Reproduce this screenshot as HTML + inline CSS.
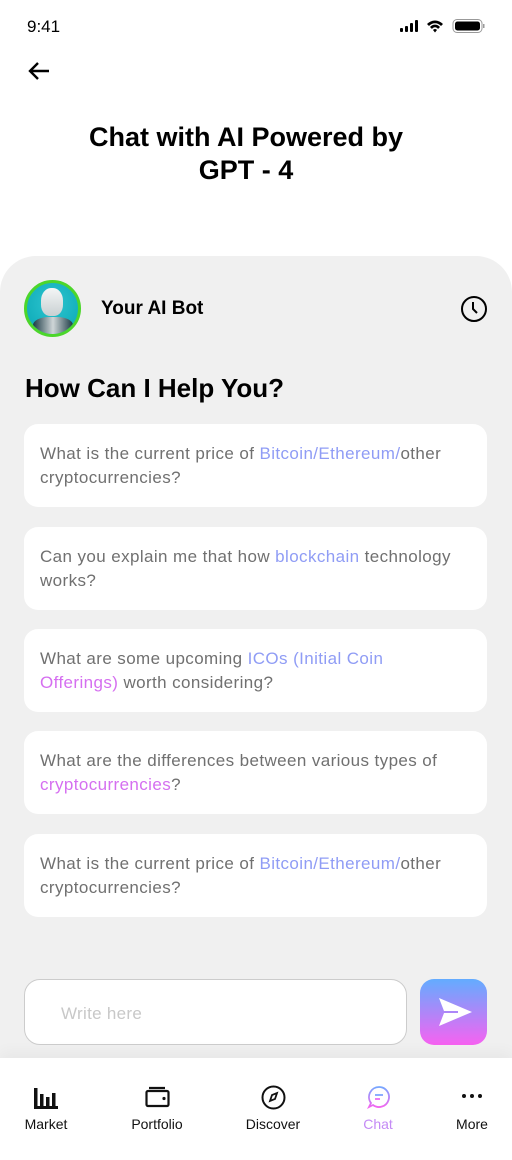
<!DOCTYPE html>
<html><head><meta charset="utf-8"><style>
*{margin:0;padding:0;box-sizing:border-box}
body{width:512px;height:1160px;background:#fff;font-family:"Liberation Sans",sans-serif;position:relative;overflow:hidden;color:#000}
.abs{position:absolute}
.panel{left:0;top:256px;width:512px;height:830px;background:#f0f0f0;border-radius:36px 36px 0 0}
.card{position:absolute;left:24px;width:463px;height:83px;background:#fff;border-radius:14px;padding:18px 16px;font-size:17px;letter-spacing:0.4px;line-height:24px;color:#707070;white-space:nowrap}
.b{color:#8f9cf5}.p{color:#d56ff0}
.nav{left:0;top:1058px;width:512px;height:102px;background:#fff;box-shadow:0 -6px 14px rgba(0,0,0,0.04)}
.ni{position:absolute;top:1116px;font-size:14px;width:80px;text-align:center;color:#111}
</style></head><body>
<div class="abs" style="left:27px;top:17px;font-size:17px;font-weight:500">9:41</div>
<svg class="abs" style="left:399px;top:18px" width="86" height="16" viewBox="0 0 86 16">
<rect x="1" y="10" width="3" height="4" rx="1"/><rect x="6" y="8" width="3" height="6" rx="1"/><rect x="11" y="5" width="3" height="9" rx="1"/><rect x="16" y="2" width="3" height="12" rx="1"/>
<path d="M28 6a11 11 0 0 1 16 0l-2 2a8 8 0 0 0-12 0zM31 9a6.5 6.5 0 0 1 10 0l-2 2a3.5 3.5 0 0 0-6 0zM34 12l2 2.5 2-2.5a2.5 2.5 0 0 0-4 0z"/>
<rect x="54" y="1.5" width="29" height="13" rx="4" fill="none" stroke="#999" stroke-width="1"/><rect x="56" y="3.5" width="25" height="9" rx="2.5"/><rect x="84" y="6" width="1.5" height="4" fill="#999"/>
</svg>
<svg class="abs" style="left:27px;top:60px" width="24" height="22" viewBox="0 0 24 22"><path d="M22 11H3M11 3L3 11l8 8" fill="none" stroke="#000" stroke-width="2.4"/></svg>
<div class="abs" style="left:0;top:121px;width:492px;text-align:center;font-size:27px;font-weight:bold;line-height:33px">Chat with AI Powered by<br>GPT - 4</div>
<div class="abs panel"></div>
<div class="abs" style="left:24px;top:280px;width:57px;height:57px;border-radius:50%;border:3px solid #4cd62b;background:radial-gradient(circle at 50% 40%,#2ec5d0,#08a6b3);overflow:hidden">
<div style="position:absolute;left:14px;top:5px;width:22px;height:28px;border-radius:45% 45% 40% 40%;background:linear-gradient(#f4f6f6,#c9d0d2)"></div>
<div style="position:absolute;left:6px;top:34px;width:40px;height:20px;border-radius:40% 40% 0 0;background:linear-gradient(90deg,#1b3a44,#cfd6d8,#1b3a44)"></div></div>
<div class="abs" style="left:101px;top:298px;font-size:19px;font-weight:bold">Your AI Bot</div>
<svg class="abs" style="left:460px;top:295px" width="28" height="28" viewBox="0 0 28 28"><circle cx="14" cy="14" r="12" fill="none" stroke="#000" stroke-width="2"/><path d="M13 7v7l4 4" fill="none" stroke="#000" stroke-width="2"/></svg>
<div class="abs" style="left:25px;top:373px;font-size:26px;font-weight:bold">How Can I Help You?</div>
<div class="card" style="top:424px">What is the current price of <span class="b">Bitcoin/Ethereum/</span>other<br>cryptocurrencies?</div>
<div class="card" style="top:527px">Can you explain me that how <span class="b">blockchain</span> technology<br>works?</div>
<div class="card" style="top:629px">What are some upcoming <span class="b">ICOs (Initial Coin</span><br><span class="p">Offerings)</span> worth considering?</div>
<div class="card" style="top:731px">What are the differences between various types of<br><span class="p">cryptocurrencies</span>?</div>
<div class="card" style="top:834px">What is the current price of <span class="b">Bitcoin/Ethereum/</span>other<br>cryptocurrencies?</div>
<div class="abs" style="left:24px;top:979px;width:383px;height:66px;background:#fff;border:1px solid #ccc;border-radius:16px;padding:24px 36px;font-size:17px;letter-spacing:0.3px;color:#c8c8c8">Write here</div>
<div class="abs" style="left:420px;top:979px;width:67px;height:66px;border-radius:14px;background:linear-gradient(#63acff,#f762f1)">
<svg width="67" height="66" viewBox="0 0 67 66"><path d="M19 19L52 33 19 47 24 34H38L38 32H24z" fill="#fff"/></svg></div>
<div class="abs nav"></div>
<svg class="abs" style="left:33px;top:1086px" width="26" height="24" viewBox="0 0 26 24"><rect x="1" y="2" width="3.5" height="21" fill="#111"/><rect x="1" y="20" width="24" height="3" fill="#111"/><rect x="7" y="8" width="3.5" height="14" fill="#111"/><rect x="13" y="11" width="3.5" height="11" fill="#111"/><rect x="19" y="7" width="3.5" height="15" fill="#111"/></svg>
<svg class="abs" style="left:145px;top:1086px" width="25" height="22" viewBox="0 0 25 22"><path d="M4 2h16M3 5h19a1.5 1.5 0 0 1 1.5 1.5v12a1.5 1.5 0 0 1-1.5 1.5H3a1.5 1.5 0 0 1-1.5-1.5V6.5A1.5 1.5 0 0 1 3 5z" fill="none" stroke="#111" stroke-width="2.2"/><circle cx="19" cy="12.5" r="1.6" fill="#111"/></svg>
<svg class="abs" style="left:261px;top:1085px" width="25" height="25" viewBox="0 0 25 25"><circle cx="12.5" cy="12.5" r="11" fill="none" stroke="#111" stroke-width="2"/><path d="M9 16l2-6 5-2-2 6z" fill="none" stroke="#111" stroke-width="1.8"/></svg>
<svg class="abs" style="left:367px;top:1085px" width="24" height="24" viewBox="0 0 24 24"><defs><linearGradient id="g" x1="0" y1="0" x2="0" y2="1"><stop offset="0" stop-color="#76a6ff"/><stop offset="1" stop-color="#f267f0"/></linearGradient></defs><path d="M12 2a10 10 0 1 1-6 18l-4 2 2-4A10 10 0 0 1 12 2z" fill="none" stroke="url(#g)" stroke-width="1.8"/><path d="M8 10h8M8 14h5" stroke="url(#g)" stroke-width="1.8"/></svg>
<svg class="abs" style="left:461px;top:1093px" width="22" height="6" viewBox="0 0 22 6"><circle cx="3" cy="3" r="2" fill="#111"/><circle cx="11" cy="3" r="2" fill="#111"/><circle cx="19" cy="3" r="2" fill="#111"/></svg>
<div class="ni" style="left:6px">Market</div>
<div class="ni" style="left:117px">Portfolio</div>
<div class="ni" style="left:233px">Discover</div>
<div class="ni" style="left:338px;color:#c48af5">Chat</div>
<div class="ni" style="left:432px">More</div>
</body></html>
